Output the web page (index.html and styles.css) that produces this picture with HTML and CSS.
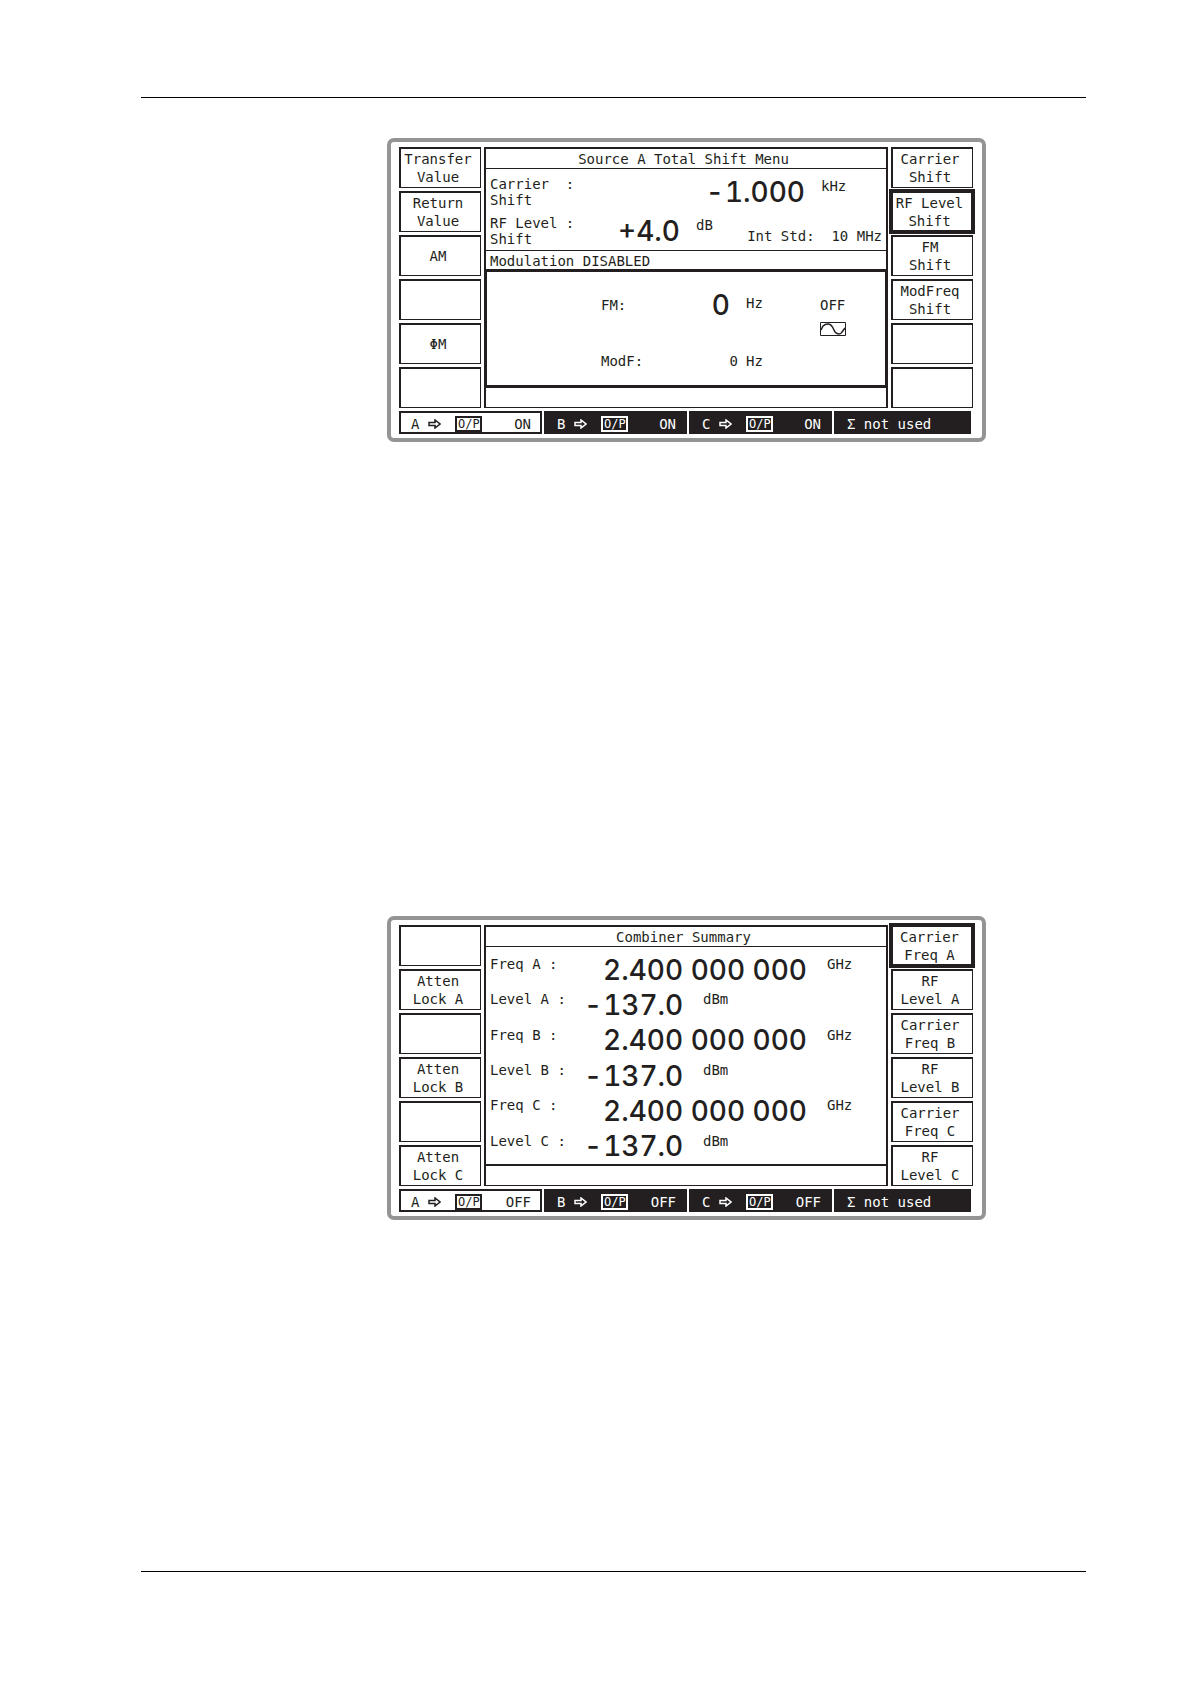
FILE: index.html
```html
<!DOCTYPE html>
<html lang="en">
<head>
    <meta charset="UTF-8">
    <meta name="viewport" content="width=device-width, initial-scale=1">
    <title>Signal source menus</title>
    <link rel="stylesheet" href="styles.css">
</head>
<body>
    <!-- shared drawings -->
    <svg class="defs" aria-hidden="true">
        <symbol id="arrow" viewBox="0 0 13 10">
            <path d="M1 3.5h6V1l5 4-5 4V6.5H1z" fill="none" stroke="currentColor" stroke-width="1.5"/>
        </symbol>
        <symbol id="sine" viewBox="0 0 26 14">
            <path d="M.5 .5h25v13H.5z" fill="none" stroke="currentColor"/>
            <path d="M1 8L3 4Q5 2 8 2T13 6L15 10Q17 12 19 12T22 10L25 6" fill="none" stroke="currentColor" stroke-width="1.5"/>
        </symbol>
    </svg>

    <div class="page">
        <hr class="rule">

        <!-- total shift menu -->
        <section class="screen">
            <div class="display">
                <div class="keys">
                    <button type="button">Transfer<br>Value</button>
                    <button type="button">Return<br>Value</button>
                    <button type="button">AM</button>
                    <button type="button" aria-label="Unused"></button>
                    <button type="button">ΦM</button>
                    <button type="button" aria-label="Unused"></button>
                </div>
                <div class="panel">
                    <div class="title">Source A Total Shift Menu</div>
                    <div class="shifts">
                        <div class="reading">
                            <span class="label">Carrier  :<br>Shift</span>
                            <span class="value wide"><i>-</i>1.000</span>
                            <span class="unit">kHz</span>
                        </div>
                        <div class="reading">
                            <span class="label">RF Level :<br>Shift</span>
                            <span class="value">+4.0</span>
                            <span class="unit">dB</span>
                            <span class="std">Int Std:  10 MHz</span>
                        </div>
                    </div>
                    <div class="state">Modulation DISABLED</div>
                    <div class="modulation">
                        <span>FM:</span>
                        <span class="value">0</span>
                        <span class="unit">Hz</span>
                        <span>OFF</span>
                        <svg class="sine" role="img" aria-label="Sine"><use href="#sine"/></svg>
                        <span>ModF:</span>
                        <span class="small">0</span>
                        <span>Hz</span>
                    </div>
                    <div class="message"></div>
                </div>
                <div class="keys">
                    <button type="button">Carrier<br>Shift</button>
                    <button type="button" class="on">RF Level<br>Shift</button>
                    <button type="button">FM<br>Shift</button>
                    <button type="button">ModFreq<br>Shift</button>
                    <button type="button" aria-label="Unused"></button>
                    <button type="button" aria-label="Unused"></button>
                </div>
            </div>
            <div class="status">
                <div class="source on">A <svg class="arrow"><use href="#arrow"/></svg><span class="op">O/P</span><span class="power">ON</span></div>
                <div class="source">B <svg class="arrow"><use href="#arrow"/></svg><span class="op">O/P</span><span class="power">ON</span></div>
                <div class="source">C <svg class="arrow"><use href="#arrow"/></svg><span class="op">O/P</span><span class="power">ON</span></div>
                <div class="source">Σ not used</div>
            </div>
        </section>

        <!-- combiner summary -->
        <section class="screen second">
            <div class="display">
                <div class="keys">
                    <button type="button" aria-label="Unused"></button>
                    <button type="button">Atten<br>Lock A</button>
                    <button type="button" aria-label="Unused"></button>
                    <button type="button">Atten<br>Lock B</button>
                    <button type="button" aria-label="Unused"></button>
                    <button type="button">Atten<br>Lock C</button>
                </div>
                <div class="panel">
                    <div class="title">Combiner Summary</div>
                    <div class="summary">
                        <div class="reading">
                            <span class="label">Freq A :</span>
                            <span class="value wide">2.400 000 000</span>
                            <span class="unit">GHz</span>
                        </div>
                        <div class="reading">
                            <span class="label">Level A :</span>
                            <span class="value"><i>-</i>137.0</span>
                            <span class="unit">dBm</span>
                        </div>
                        <div class="reading">
                            <span class="label">Freq B :</span>
                            <span class="value wide">2.400 000 000</span>
                            <span class="unit">GHz</span>
                        </div>
                        <div class="reading">
                            <span class="label">Level B :</span>
                            <span class="value"><i>-</i>137.0</span>
                            <span class="unit">dBm</span>
                        </div>
                        <div class="reading">
                            <span class="label">Freq C :</span>
                            <span class="value wide">2.400 000 000</span>
                            <span class="unit">GHz</span>
                        </div>
                        <div class="reading">
                            <span class="label">Level C :</span>
                            <span class="value"><i>-</i>137.0</span>
                            <span class="unit">dBm</span>
                        </div>
                    </div>
                    <div class="message line"></div>
                </div>
                <div class="keys">
                    <button type="button" class="on">Carrier<br>Freq A</button>
                    <button type="button">RF<br>Level A</button>
                    <button type="button">Carrier<br>Freq B</button>
                    <button type="button">RF<br>Level B</button>
                    <button type="button">Carrier<br>Freq C</button>
                    <button type="button">RF<br>Level C</button>
                </div>
            </div>
            <div class="status">
                <div class="source on">A <svg class="arrow"><use href="#arrow"/></svg><span class="op">O/P</span><span class="power">OFF</span></div>
                <div class="source">B <svg class="arrow"><use href="#arrow"/></svg><span class="op">O/P</span><span class="power">OFF</span></div>
                <div class="source">C <svg class="arrow"><use href="#arrow"/></svg><span class="op">O/P</span><span class="power">OFF</span></div>
                <div class="source">Σ not used</div>
            </div>
        </section>

        <hr class="rule bottom">
    </div>
</body>
</html>
```
FILE: styles.css
```css
* {
    margin: 0;
    padding: 0;
    box-sizing: border-box;
}
body {
    background: #fff;
    color: #231f20;
    font: 14px/16px "DejaVu Sans Mono", "Liberation Mono", monospace;
}
.defs {
    display: none;
}
.page {
    display: flex;
    flex-direction: column;
    min-height: 100vh;
    padding: 97px 104px 112px 141px;
}
.rule {
    border: 0;
    border-top: 1px solid #000;
}
.rule.bottom {
    margin-top: auto;
}

/* grey bezel */
.screen {
    margin: 40px 100px 0 246px;
    padding: 5px 9px 4px 8px;
    border: 4px solid #949494;
    border-radius: 7px;
}
.screen.second {
    margin-top: 474px;
}
.display {
    display: grid;
    grid-template-columns: 82px 1fr 82px;
    gap: 3px;
}

/* soft keys */
.keys {
    display: grid;
    gap: 3px;
}
.keys button {
    height: 41px;
    padding-right: 5px;
    border: solid #231f20;
    border-width: 2px 1px 1px 2px;
    background: #fff;
    color: inherit;
    font: inherit;
    line-height: 18px;
}
.keys button.on {
    border-width: 2px;
    box-shadow: 0 0 0 2px #231f20;
}

/* centre panel */
.panel {
    display: flex;
    flex-direction: column;
    border: 2px solid #231f20;
    border-bottom-width: 1px;
}
.title {
    height: 20px;
    padding-right: 5px;
    border-bottom: 1px solid #231f20;
    line-height: 20px;
    text-align: center;
}
.shifts {
    display: grid;
    gap: 7px;
    padding: 7px 4px 3px;
}
.reading {
    display: flex;
    align-items: center;
}
.label {
    width: 100px;
    white-space: pre;
}
.value {
    width: 90px;
    font: 500 28px/28px Inter, "Liberation Sans", sans-serif;
    font-variant-numeric: tabular-nums;
    text-align: right;
    white-space: nowrap;
}
.value.wide {
    width: 215px;
}
.value i {
    margin-right: 1px;
    font-style: normal;
}
.unit {
    align-self: flex-start;
    margin: 2px 0 0 16px;
}
.std {
    align-self: flex-end;
    margin: 0 0 3px auto;
    white-space: pre;
}
.state {
    height: 19px;
    padding: 0 4px;
    border-top: 1px solid #231f20;
    line-height: 20px;
}
.modulation {
    display: grid;
    grid-template-columns: 60px 77px 82px auto;
    grid-template-rows: 32px 16px 32px;
    justify-content: start;
    align-items: center;
    flex: 1;
    align-content: start;
    padding: 17px 0 0 114px;
    border: solid #231f20;
    border-width: 3px 1px;
}
.modulation .value {
    width: auto;
    padding-right: 8px;
}
.modulation .unit {
    margin: 6px 0 0 8px;
}
.modulation .sine {
    grid-column: 4;
    width: 26px;
    height: 14px;
}
.modulation .small {
    text-align: right;
}
.modulation .small + span {
    margin-left: 8px;
}
.modulation .sine ~ span {
    align-self: end;
}
.message {
    height: 19px;
}
.message.line {
    height: 21px;
    border-top: 2px solid #231f20;
}

/* six rows of the summary */
.summary {
    display: grid;
    grid-template-rows: repeat(6, 1fr);
    flex: 1;
    padding: 5px 4px 0;
}
.summary .label {
    align-self: flex-start;
    width: 94px;
    margin-top: 4px;
}
.summary .value {
    width: 99px;
}
.summary .value.wide {
    width: 223px;
}
.summary .unit {
    margin: 4px 0 0 20px;
}

/* output status */
.status {
    display: grid;
    grid-template-columns: repeat(3, 25%) 1fr;
    gap: 2px;
    margin: 3px 2px 0 0;
}
.source {
    display: flex;
    align-items: center;
    height: 23px;
    padding: 2px 11px 0 13px;
    background: #231f20;
    color: #fff;
}
.source.on {
    padding: 2px 9px 0 10px;
    border: 2px solid #231f20;
    background: #fff;
    color: #231f20;
}
.arrow {
    width: 13px;
    height: 10px;
    margin: 0 14px 0 9px;
}
.op {
    width: 27px;
    border: 2px solid;
    font-size: 12px;
    line-height: 12px;
    text-align: center;
}
.power {
    margin-left: auto;
}
```
